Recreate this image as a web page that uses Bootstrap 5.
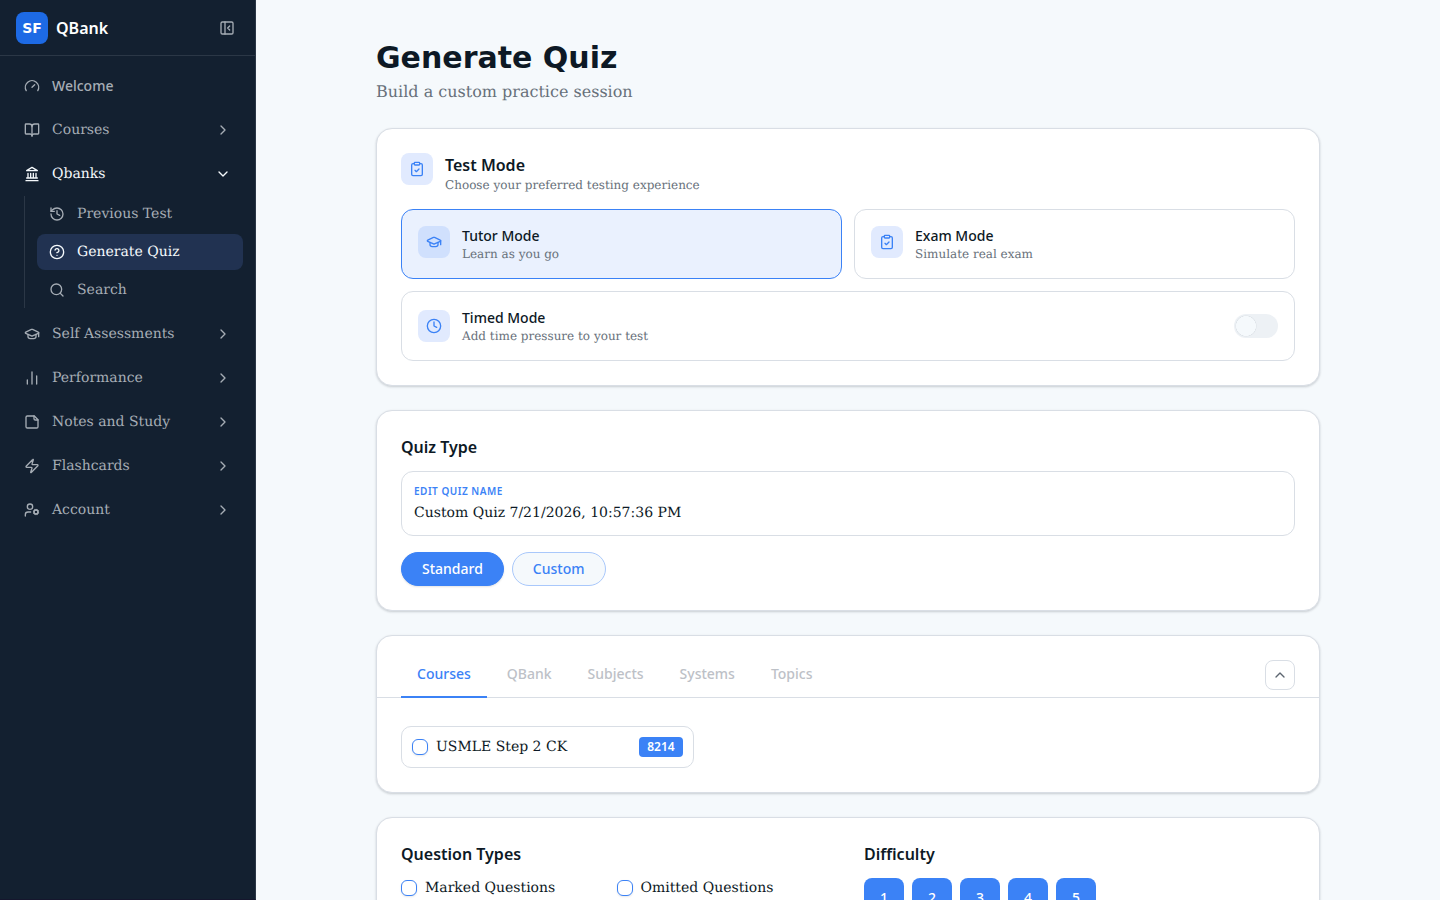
<!DOCTYPE html>
<html lang="en">
<head>
<meta charset="utf-8">
<meta name="viewport" content="width=device-width, initial-scale=1">
<title>Generate Quiz</title>
<link href="https://cdn.jsdelivr.net/npm/bootstrap@5.3.0/dist/css/bootstrap.min.css" rel="stylesheet">
<style>
:root{--blue:#3b82f6;--ink:#0d1925;--muted:#67707a;--line:#d9dee5;--page:#f5f9fc;--side:#132030;--side-text:#a6adb5;--ui:"Noto Sans",sans-serif}
body{font-family:"DejaVu Serif",serif;font-size:14px;line-height:20px;color:var(--ink);background:var(--page)}
body,.side-link,.sub,.field input{text-rendering:geometricPrecision}
.ui,.title,.logo,.count,.field-label{text-rendering:auto}
svg{fill:none;stroke:currentColor;stroke-width:2;stroke-linecap:round;stroke-linejoin:round;width:16px;height:16px;flex:none;display:block}
.ui{font-family:var(--ui)}
.fw-md{font-weight:500}
.fs12{font-size:12px;line-height:16px}
.fs16{font-size:16px;line-height:24px}
.sub{color:var(--muted)}
.gap-12{gap:12px}
.sidebar{width:256px;background:var(--side);border-right:1px solid #2b3746;border-bottom:1px solid #15162d;color:var(--side-text)}
.side-head{height:56px;border-bottom:1px solid #2b3746}
.logo{width:32px;height:32px;border-radius:8px;background:#1d6ae5;font:700 14px/20px "DejaVu Sans",sans-serif}
.side-nav{padding:12px}
.side-link{height:36px;padding:0 12px;border-radius:8px;color:inherit;text-decoration:none;background:none;border:0;text-align:left}
.side-link:hover,.side-link.active{color:#f5f9fc}
.side-link.active{background:#213251}
.side-sub{margin:-4px 0 0 12px;padding-left:12px;border-left:1px solid #2b3746;gap:2px}
.page{max-width:944px;padding:40px 0 24px}
.title{font:700 30px/36px "DejaVu Sans",sans-serif}
.panel{background:#fff;border:1px solid var(--line);border-radius:16px;box-shadow:0 1px 3px rgba(15,27,41,.1),0 1px 2px rgba(15,27,41,.1)}
.panel-title{margin-bottom:12px}
.tile{width:32px;height:32px;border-radius:8px;background:#e1eafe;color:var(--blue)}
.mode{background:#fff;border:1px solid var(--line);border-radius:12px;padding:16px;text-align:left;color:inherit}
.mode.active{background:#eaf1fe;border-color:var(--blue)}
.mode.active .tile{background:#d0e0fd}
.cols-2{display:grid;grid-template-columns:1fr 1fr}
.cols-3{display:grid;grid-template-columns:repeat(3,1fr);gap:8px}
.span-all{grid-column:1/-1}
.form-switch .form-check-input.toggle{width:44px;height:24px;margin:0;border:0;background-color:#edf1f5;background-image:radial-gradient(circle closest-side,#f5f9fc 88%,#dfe4e9 92%,transparent 100%);background-size:22px 22px;background-position:1px center;background-repeat:no-repeat}
.form-switch .form-check-input.toggle:checked{background-color:var(--blue);background-position:21px center}
.field{border:1px solid var(--line);border-radius:12px;padding:12px}
.field-label{font:600 10px/15px var(--ui);color:var(--blue);letter-spacing:.05em;text-transform:uppercase}
.field input{height:20px;padding:0;border:0;outline:0;color:inherit;background:none}
.pill{height:34px;padding:0 20px;border:1px solid var(--blue);border-radius:17px;font:500 14px/20px var(--ui);color:#fff;background:var(--blue);box-shadow:0 1px 2px rgba(15,27,41,.12)}
.pill.alt{background:var(--page);border-color:#a9c8fb;color:var(--blue);box-shadow:none}
.tab-bar{padding:24px 24px 0;border-bottom:1px solid var(--line)}
.tab-btn{padding:4px 16px 12px;margin-bottom:-1px;border:0;border-bottom:2px solid transparent;background:none;font:500 14px/20px var(--ui);color:#bdc1c7}
.tab-btn.active{color:var(--blue);border-color:var(--blue)}
.collapse-btn{width:30px;height:30px;border:1px solid var(--line);border-radius:8px;background:#fff;color:#5c6570}
.course{border:1px solid var(--line);border-radius:10px;padding:10px}
.form-check-input.tick{width:16px;height:16px;margin:0;border:1px solid var(--blue);border-radius:6px;flex:none;box-shadow:0 1px 2px rgba(15,27,41,.1)}
.count{font:600 12px/20px var(--ui);padding:0 8px;border-radius:4px;background:var(--blue)}
.level{width:40px;height:40px;border:0;border-radius:8px;background:var(--blue);color:#fff;font:500 14px/20px var(--ui)}
.bottom{column-gap:32px}
.scroll{scrollbar-width:none}
</style>
</head>
<body>
<svg class="d-none">
<symbol id="right" viewBox="0 0 24 24"><path d="m9 18 6-6-6-6"/></symbol>
<symbol id="cap" viewBox="0 0 24 24"><path d="M21.42 10.922a1 1 0 0 0-.019-1.838L12.83 5.18a2 2 0 0 0-1.66 0L2.6 9.08a1 1 0 0 0 0 1.832l8.57 3.908a2 2 0 0 0 1.66 0z"/><path d="M22 10v6"/><path d="M6 12.5V16a6 3 0 0 0 12 0v-3.5"/></symbol>
<symbol id="clip" viewBox="0 0 24 24"><rect width="8" height="4" x="8" y="2" rx="1"/><path d="M16 4h2a2 2 0 0 1 2 2v14a2 2 0 0 1-2 2H6a2 2 0 0 1-2-2V6a2 2 0 0 1 2-2h2"/><path d="m9 14 2 2 4-4"/></symbol>
</svg>
<div class="d-flex vh-100 overflow-hidden">
<aside class="sidebar flex-shrink-0 d-flex flex-column">
  <div class="side-head d-flex align-items-center gap-2 px-3">
    <span class="logo d-flex align-items-center justify-content-center text-white">SF</span>
    <span class="ui fs16 fw-semibold text-white me-auto">QBank</span>
    <button class="btn p-1 border-0 text-reset" aria-label="Collapse sidebar"><svg viewBox="0 0 24 24"><rect width="18" height="18" x="3" y="3" rx="2"/><path d="M9 3v18"/><path d="m16 15-3-3 3-3"/></svg></button>
  </div>
  <nav class="side-nav d-flex flex-column gap-2">
    <a href="#" class="side-link ui fw-md d-flex align-items-center gap-12"><svg viewBox="0 0 24 24"><path d="m12 14 4-4"/><path d="M3.34 19a10 10 0 1 1 17.32 0"/></svg>Welcome</a>
    <button class="side-link d-flex align-items-center gap-12"><svg viewBox="0 0 24 24"><path d="M12 7v14"/><path d="M3 18a1 1 0 0 1-1-1V4a1 1 0 0 1 1-1h5a4 4 0 0 1 4 4 4 4 0 0 1 4-4h5a1 1 0 0 1 1 1v13a1 1 0 0 1-1 1h-6a3 3 0 0 0-3 3 3 3 0 0 0-3-3z"/></svg><span class="me-auto">Courses</span><svg><use href="#right"/></svg></button>
    <button class="side-link active bg-transparent d-flex align-items-center gap-12" aria-expanded="true"><svg viewBox="0 0 24 24"><path d="M3 22h18M6 18v-7M10 18v-7M14 18v-7M18 18v-7M4 18h16"/><path d="m12 2 8 5H4z"/></svg><span class="me-auto">Qbanks</span><svg viewBox="0 0 24 24"><path d="m6 9 6 6 6-6"/></svg></button>
    <div class="side-sub d-flex flex-column">
      <a href="#" class="side-link d-flex align-items-center gap-12"><svg viewBox="0 0 24 24"><path d="M3 12a9 9 0 1 0 9-9 9.75 9.75 0 0 0-6.74 2.74L3 8"/><path d="M3 3v5h5"/><path d="M12 7v5l4 2"/></svg>Previous Test</a>
      <a href="#" class="side-link active d-flex align-items-center gap-12" aria-current="page"><svg viewBox="0 0 24 24"><circle cx="12" cy="12" r="10"/><path d="M9.09 9a3 3 0 0 1 5.83 1c0 2-3 3-3 3"/><path d="M12 17h.01"/></svg>Generate Quiz</a>
      <a href="#" class="side-link d-flex align-items-center gap-12"><svg viewBox="0 0 24 24"><circle cx="11" cy="11" r="8"/><path d="m21 21-4.3-4.3"/></svg>Search</a>
    </div>
    <button class="side-link d-flex align-items-center gap-12"><svg><use href="#cap"/></svg><span class="me-auto">Self Assessments</span><svg><use href="#right"/></svg></button>
    <button class="side-link d-flex align-items-center gap-12"><svg viewBox="0 0 24 24"><path d="M5 21v-6M12 21V3M19 21V9"/></svg><span class="me-auto">Performance</span><svg><use href="#right"/></svg></button>
    <button class="side-link d-flex align-items-center gap-12"><svg viewBox="0 0 24 24"><path d="M15.5 3H5a2 2 0 0 0-2 2v14a2 2 0 0 0 2 2h14a2 2 0 0 0 2-2V8.500z"/><path d="M15 3v4a2 2 0 0 0 2 2h4"/></svg><span class="me-auto">Notes and Study</span><svg><use href="#right"/></svg></button>
    <button class="side-link d-flex align-items-center gap-12"><svg viewBox="0 0 24 24"><path d="M4 14a1 1 0 0 1-.78-1.630l9.900-10.200a.5.5 0 0 1 .86.460l-1.920 6.020A1 1 0 0 0 13 10h7a1 1 0 0 1 .78 1.630l-9.900 10.200a.5.5 0 0 1-.86-.460l1.920-6.020A1 1 0 0 0 11 14z"/></svg><span class="me-auto">Flashcards</span><svg><use href="#right"/></svg></button>
    <button class="side-link d-flex align-items-center gap-12"><svg viewBox="0 0 24 24"><path d="M10 15H6a4 4 0 0 0-4 4v2"/><circle cx="9" cy="7" r="4"/><circle cx="18" cy="15" r="3"/><path d="m21.700 16.400-.9-.3M15.200 13.900l-.9-.3M16.600 18.700l.3-.9M19.100 12.200l.3-.9M19.600 18.700l-.4-1M16.800 12.300l-.4-1M14.300 16.600l1-.4M20.700 13.800l1-.4"/></svg><span class="me-auto">Account</span><svg><use href="#right"/></svg></button>
  </nav>
</aside>
<main class="scroll flex-grow-1 overflow-auto px-4">
<div class="page mx-auto d-flex flex-column gap-4">
  <header>
    <h1 class="title mb-1">Generate Quiz</h1>
    <p class="fs16 sub mb-0">Build a custom practice session</p>
  </header>

  <section class="panel p-4">
    <div class="d-flex gap-12 mb-3">
      <span class="tile d-flex align-items-center justify-content-center"><svg><use href="#clip"/></svg></span>
      <div>
        <h2 class="ui fs16 fw-semibold mb-0">Test Mode</h2>
        <p class="fs12 sub mb-0">Choose your preferred testing experience</p>
      </div>
    </div>
    <div class="cols-2 gap-12">
      <button class="mode active d-flex gap-12" aria-pressed="true">
        <span class="tile d-flex align-items-center justify-content-center"><svg><use href="#cap"/></svg></span>
        <span class="d-flex flex-column"><span class="ui fw-md">Tutor Mode</span><span class="fs12 sub">Learn as you go</span></span>
      </button>
      <button class="mode d-flex gap-12" aria-pressed="false">
        <span class="tile d-flex align-items-center justify-content-center"><svg><use href="#clip"/></svg></span>
        <span class="d-flex flex-column"><span class="ui fw-md">Exam Mode</span><span class="fs12 sub">Simulate real exam</span></span>
      </button>
      <div class="mode span-all d-flex align-items-center gap-12">
        <span class="tile d-flex align-items-center justify-content-center"><svg viewBox="0 0 24 24"><circle cx="12" cy="12" r="10"/><path d="M12 6v6l4 2"/></svg></span>
        <label for="timed" class="d-flex flex-column me-auto"><span class="ui fw-md">Timed Mode</span><span class="fs12 sub">Add time pressure to your test</span></label>
        <div class="form-switch p-0 m-0 d-flex"><input class="form-check-input toggle" type="checkbox" role="switch" id="timed"></div>
      </div>
    </div>
  </section>

  <section class="panel p-4">
    <h2 class="panel-title ui fs16 fw-semibold">Quiz Type</h2>
    <div class="field d-flex flex-column gap-1 mb-3">
      <label class="field-label" for="quiz-name">Edit Quiz Name</label>
      <input id="quiz-name" type="text" value="Custom Quiz 7/21/2026, 10:57:36 PM">
    </div>
    <div class="d-flex gap-2">
      <button class="pill">Standard</button>
      <button class="pill alt">Custom</button>
    </div>
  </section>

  <section class="panel">
    <div class="tab-bar d-flex justify-content-between align-items-start">
      <div class="d-flex gap-1" role="tablist">
        <button class="tab-btn active" role="tab" aria-selected="true">Courses</button>
        <button class="tab-btn" role="tab">QBank</button>
        <button class="tab-btn" role="tab">Subjects</button>
        <button class="tab-btn" role="tab">Systems</button>
        <button class="tab-btn" role="tab">Topics</button>
      </div>
      <button class="collapse-btn d-flex align-items-center justify-content-center p-0" aria-label="Collapse"><svg viewBox="0 0 24 24"><path d="m18 15-6-6-6 6"/></svg></button>
    </div>
    <div class="cols-3 px-4 pb-4 pt-4 mt-1">
      <div class="course d-flex align-items-center gap-2">
        <input class="form-check-input tick" type="checkbox" id="usmle">
        <label for="usmle" class="me-auto">USMLE Step 2 CK</label>
        <span class="count text-white">8214</span>
      </div>
    </div>
  </section>

  <section class="panel p-4 cols-2 bottom">
    <div>
      <h2 class="panel-title ui fs16 fw-semibold">Question Types</h2>
      <div class="cols-2">
        <div class="d-flex align-items-center gap-2"><input class="form-check-input tick" type="checkbox" id="marked"><label for="marked">Marked Questions</label></div>
        <div class="d-flex align-items-center gap-2"><input class="form-check-input tick" type="checkbox" id="omitted"><label for="omitted">Omitted Questions</label></div>
      </div>
    </div>
    <div>
      <h2 class="panel-title ui fs16 fw-semibold">Difficulty</h2>
      <div class="d-flex gap-2">
        <button class="level">1</button><button class="level">2</button><button class="level">3</button><button class="level">4</button><button class="level">5</button>
      </div>
    </div>
  </section>
</div>
</main>
</div>
<script src="https://cdn.jsdelivr.net/npm/bootstrap@5.3.0/dist/js/bootstrap.bundle.min.js"></script>
</body>
</html>
